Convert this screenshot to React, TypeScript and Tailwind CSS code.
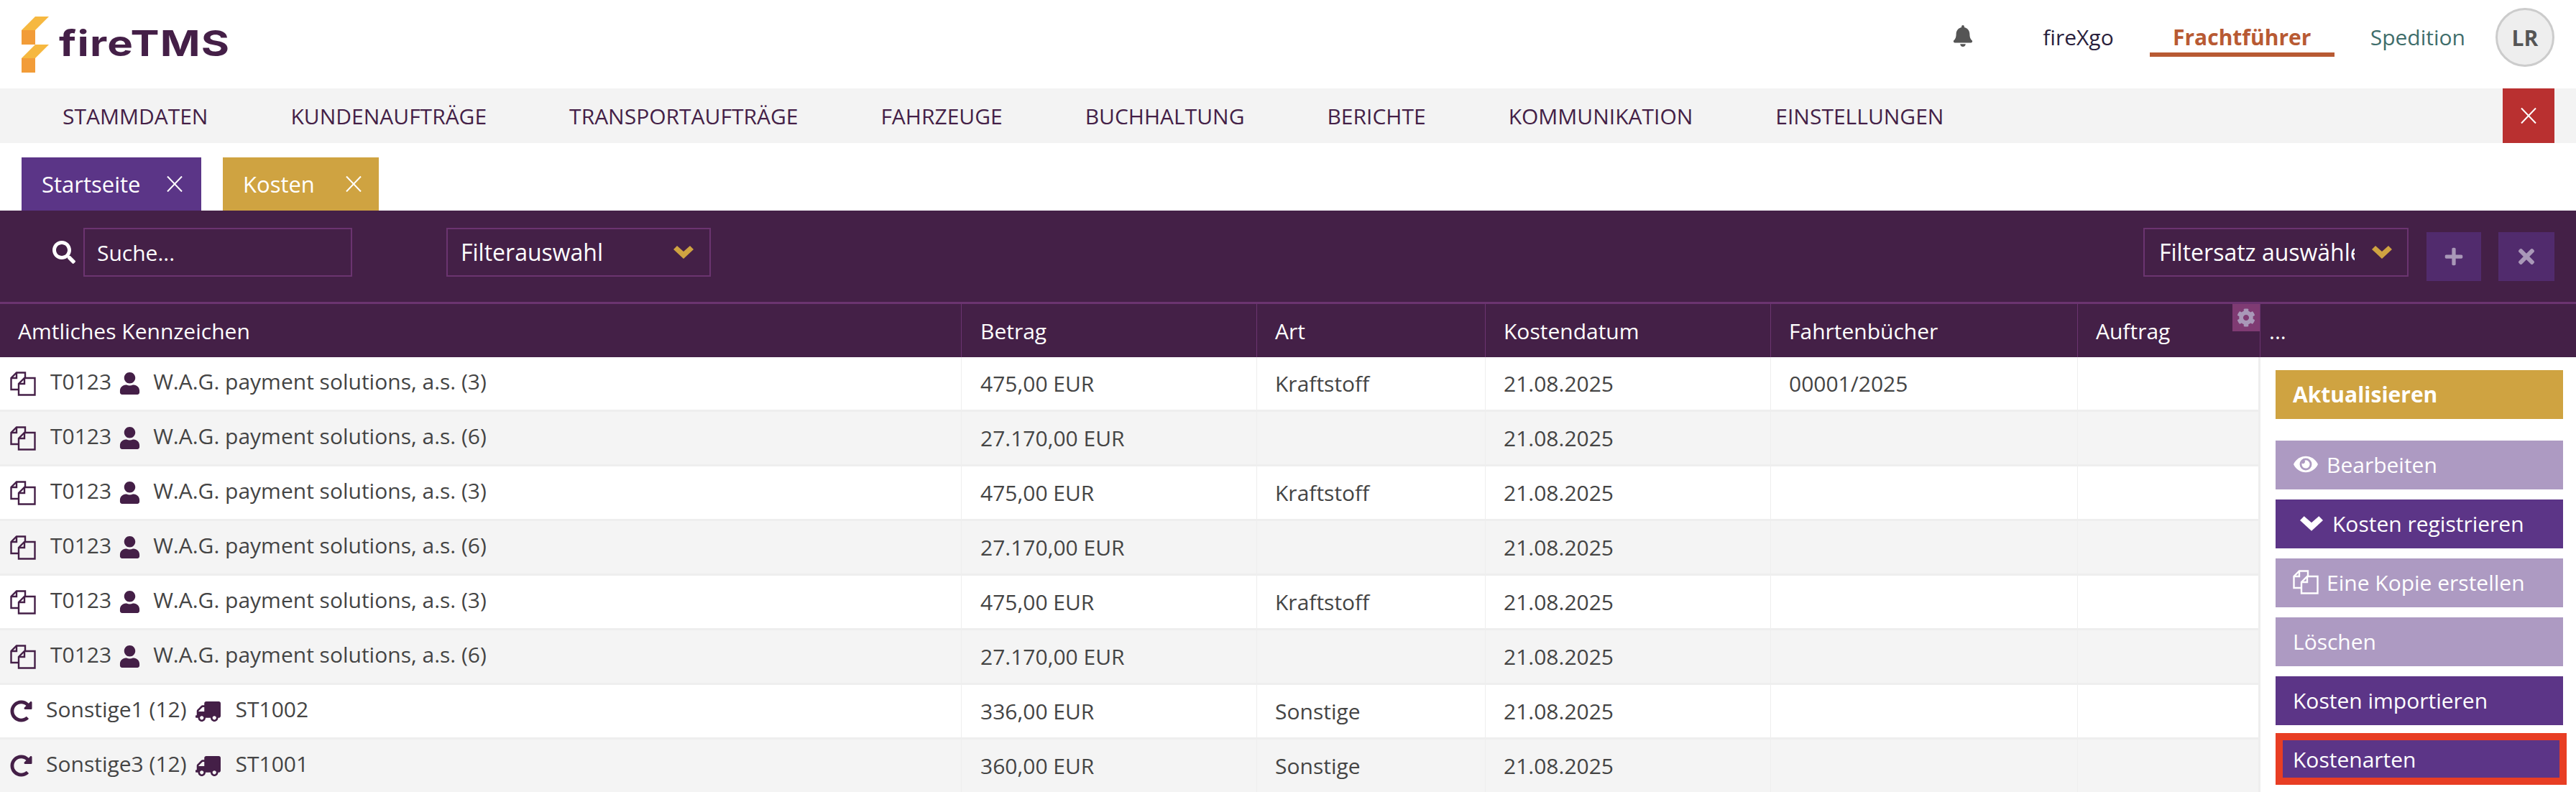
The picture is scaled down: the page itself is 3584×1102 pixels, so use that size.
import { FaBell, FaCog, FaEye, FaPlus, FaRedoAlt, FaSearch, FaTimes, FaTruck, FaUser } from "react-icons/fa";

const menu = ["STAMMDATEN", "KUNDENAUFTRÄGE", "TRANSPORTAUFTRÄGE", "FAHRZEUGE", "BUCHHALTUNG", "BERICHTE", "KOMMUNIKATION", "EINSTELLUNGEN"];

const rows = [
  { kind: "copy", name: "T0123", owner: "W.A.G. payment solutions, a.s. (3)", amount: "475,00 EUR", art: "Kraftstoff", book: "00001/2025" },
  { kind: "copy", name: "T0123", owner: "W.A.G. payment solutions, a.s. (6)", amount: "27.170,00 EUR", art: "", book: "" },
  { kind: "copy", name: "T0123", owner: "W.A.G. payment solutions, a.s. (3)", amount: "475,00 EUR", art: "Kraftstoff", book: "" },
  { kind: "copy", name: "T0123", owner: "W.A.G. payment solutions, a.s. (6)", amount: "27.170,00 EUR", art: "", book: "" },
  { kind: "copy", name: "T0123", owner: "W.A.G. payment solutions, a.s. (3)", amount: "475,00 EUR", art: "Kraftstoff", book: "" },
  { kind: "copy", name: "T0123", owner: "W.A.G. payment solutions, a.s. (6)", amount: "27.170,00 EUR", art: "", book: "" },
  { kind: "repeat", name: "Sonstige1 (12)", owner: "ST1002", amount: "336,00 EUR", art: "Sonstige", book: "" },
  { kind: "repeat", name: "Sonstige3 (12)", owner: "ST1001", amount: "360,00 EUR", art: "Sonstige", book: "" },
];

const ThinX = ({ className }: { className?: string }) => (
  <svg viewBox="0 0 22 22" className={className} fill="none" stroke="currentColor" strokeWidth="2">
    <path d="M1 0.5 L21 21.5 M21 0.5 L1 21.5" />
  </svg>
);

const CopyIcon = ({ className }: { className?: string }) => (
  <svg viewBox="0 0 36 34" className={className} fill="none" stroke="currentColor" strokeWidth="2.4">
    <path d="M11 25 H1.5 V9 L9 1.5 H21 V9" />
    <path d="M9 1.5 V9 H1.5" />
    <path d="M12 32.5 V17 L20 9 H34.5 V32.5 Z" />
    <path d="M20 9 V17 H12" />
  </svg>
);

const Chevron = ({ className }: { className?: string }) => (
  <svg viewBox="0 0 28 18" className={className} fill="currentColor">
    <polygon points="0,5 5,0 14,8 23,0 28,5 14,18" />
  </svg>
);

const Logo = () => (
  <svg viewBox="0 0 38 78" className="w-[38px] h-[78px]">
    <polygon points="19,0 38,0 19,19 0,19" fill="#F6B840" />
    <rect x="0" y="19" width="19" height="20" fill="#F29C38" />
    <polygon points="19,39 38,39 19,58 0,58" fill="#F6B840" />
    <rect x="0" y="58" width="19" height="20" fill="#F29C38" />
  </svg>
);

const btn = "flex items-center h-[68px] w-[400px] pl-6 pb-[2px] text-white text-[30px] shrink-0";

const App = () => {
  return (
    <div className="h-[1102px] w-[3584px] overflow-hidden bg-white text-[30px] text-[#444] font-['Open_Sans',sans-serif]">
      {/* top bar */}
      <header className="h-[123px] flex items-center pl-[30px] pr-[30px]">
        <Logo />
        <span className="ml-[14px] mb-[4px] inline-block origin-left scale-x-[1.2] text-[50px] leading-none font-bold text-[#441F47] font-['Inter',sans-serif] tracking-[1px]">fireTMS</span>
        <div className="ml-auto flex items-center">
          <FaBell className="text-[#555] w-[30px] h-[30px] mb-[23px]" />
          <span className="ml-[96px] mb-[21px] text-[#2a1f3d]">fireXgo</span>
          <span className="relative ml-[50px] w-[257px] mb-[21px] text-center font-bold text-[#B85A33]">
            Frachtführer
            <span className="absolute left-0 right-0 -bottom-[5px] h-[6px] bg-[#B85A33]" />
          </span>
          <span className="ml-[50px] mb-[21px] text-[#3F6E6B]">Spedition</span>
          <span className="ml-[42px] mb-[19px] w-[82px] h-[82px] rounded-full bg-[#EEE] border-[3px] border-[#CCC] flex items-center justify-center font-bold text-[#555]">LR</span>
        </div>
      </header>

      {/* main menu */}
      <nav className="h-[76px] bg-[#F3F3F3] flex items-center pl-[87px] pr-[30px] gap-[115px] text-[#441F47]">
        {menu.map((m) => (
          <span key={m}>{m}</span>
        ))}
        <button className="ml-auto w-[72px] h-full bg-[#B93030] text-white flex items-center justify-center">
          <ThinX className="w-[22px] h-[22px]" />
        </button>
      </nav>

      {/* tabs */}
      <div className="h-[94px] flex items-end pl-[30px] gap-[30px] text-white text-[31px]">
        <div className="h-[74px] w-[250px] bg-[#5B3587] flex items-center justify-between pl-[28px] pr-[26px]">
          <span>Startseite</span>
          <ThinX className="w-[22px] h-[22px]" />
        </div>
        <div className="h-[74px] w-[217px] bg-[#CFA341] flex items-center justify-between pl-[28px] pr-[24px]">
          <span>Kosten</span>
          <ThinX className="w-[22px] h-[22px]" />
        </div>
      </div>

      {/* filters */}
      <div className="h-[127px] bg-[#442047] flex items-start pt-[24px] text-white">
        <FaSearch className="ml-[73px] mt-[18px] w-[32px] h-[32px]" />
        <div className="ml-[11px] w-[374px] h-[68px] border-2 border-[#6B3470] flex items-center pl-[17px]">Suche...</div>
        <div className="ml-[131px] w-[368px] h-[68px] border-2 border-[#6B3470] flex items-center justify-between pl-[18px] pr-[22px] text-[32px]">
          <span>Filterauswahl</span>
          <Chevron className="w-[28px] h-[18px] text-[#CFA341]" />
        </div>
        <div className="ml-auto w-[369px] h-[68px] border-2 border-[#6B3470] flex items-center pl-[20px] text-[32px]">
          <span className="w-[272px] overflow-hidden whitespace-nowrap">Filtersatz auswählen</span>
          <Chevron className="ml-[24px] w-[28px] h-[18px] text-[#CFA341]" />
        </div>
        <button className="ml-[25px] mt-[6px] w-[76px] h-[68px] bg-[#512B6D] flex items-center justify-center text-[#A998B8]">
          <FaPlus className="w-[28px] h-[28px]" />
        </button>
        <button className="ml-[24px] mr-[30px] mt-[6px] w-[78px] h-[68px] bg-[#512B6D] flex items-center justify-center text-[#A998B8]">
          <FaTimes className="w-[28px] h-[32px]" />
        </button>
      </div>

      {/* table */}
      <table className="w-full table-fixed border-separate border-spacing-0">
        <colgroup>
          <col className="w-[1338px]" />
          <col className="w-[411px]" />
          <col className="w-[318px]" />
          <col className="w-[397px]" />
          <col className="w-[427px]" />
          <col className="w-[254px]" />
          <col className="w-[439px]" />
        </colgroup>
        <thead>
          <tr className="bg-[#442047] text-white text-left">
            <th className="h-[77px] font-normal pl-[25px] border-t-[3px] border-r border-[#6B3470]">Amtliches Kennzeichen</th>
            <th className="font-normal pl-[26px] border-t-[3px] border-r border-[#6B3470]">Betrag</th>
            <th className="font-normal pl-[25px] border-t-[3px] border-r border-[#6B3470]">Art</th>
            <th className="font-normal pl-[25px] border-t-[3px] border-r border-[#6B3470]">Kostendatum</th>
            <th className="font-normal pl-[25px] border-t-[3px] border-r border-[#6B3470]">Fahrtenbücher</th>
            <th className="relative font-normal pl-[25px] border-t-[3px] border-r border-[#6B3470]">
              Auftrag
              <span className="absolute top-0 right-0 w-[38px] h-[38px] bg-[#7F3B73] flex items-center justify-center text-[#A998B8]">
                <FaCog className="w-[26px] h-[26px]" />
              </span>
            </th>
            <th className="font-normal pl-[12px] border-t-[3px] border-[#6B3470]">...</th>
          </tr>
        </thead>
        <tbody>
          {rows.map((row, i) => (
            <tr key={i} className={i % 2 ? "bg-[#F4F4F4]" : "bg-white"}>
              <td className="h-[76px] pl-[14px] border-b-[3px] border-r border-[#EEE]">
                <div className="flex items-center whitespace-nowrap text-[#444]">
                  {row.kind === "copy" ? (
                    <>
                      <CopyIcon className="w-[36px] h-[34px] text-[#441F47]" />
                      <span className="ml-[20px] mb-[6px]">{row.name}</span>
                      <FaUser className="ml-[11px] w-[29px] h-[31px] text-[#441F47]" />
                      <span className="ml-[18px] mb-[6px]">{row.owner}</span>
                    </>
                  ) : (
                    <>
                      <FaRedoAlt className="w-[31px] h-[31px] text-[#441F47]" />
                      <span className="ml-[19px] mb-[6px]">{row.name}</span>
                      <FaTruck className="ml-[12px] w-[35px] h-[30px] text-[#441F47] -scale-x-100" />
                      <span className="ml-[21px] mb-[6px]">{row.owner}</span>
                    </>
                  )}
                </div>
              </td>
              <td className="pl-[26px] border-b-[3px] border-r border-[#EEE]">{row.amount}</td>
              <td className="pl-[25px] border-b-[3px] border-r border-[#EEE]">{row.art}</td>
              <td className="pl-[25px] border-b-[3px] border-r border-[#EEE]">21.08.2025</td>
              <td className="pl-[25px] border-b-[3px] border-r border-[#EEE]">{row.book}</td>
              <td className="border-b-[3px] border-r-[3px] border-[#EEE]"></td>
              {i === 0 && (
                <td rowSpan={rows.length} className="align-top bg-white pl-[21px] pt-[18px]">
                  <div className="flex flex-col">
                    <button className={`${btn} bg-[#CFA341] font-bold`}>Aktualisieren</button>
                    <button className={`${btn} mt-[30px] bg-[#AD9AC2]`}>
                      <FaEye className="w-[36px] h-[30px] mr-[11px]" />
                      Bearbeiten
                    </button>
                    <button className={`${btn} mt-[14px] bg-[#5C3587] !pl-[34px]`}>
                      <Chevron className="w-[32px] h-[21px] mr-[13px]" />
                      Kosten registrieren
                    </button>
                    <button className={`${btn} mt-[14px] bg-[#AD9AC2]`}>
                      <CopyIcon className="w-[36px] h-[34px] mr-[11px]" />
                      Eine Kopie erstellen
                    </button>
                    <button className={`${btn} mt-[14px] bg-[#AD9AC2]`}>Löschen</button>
                    <button className={`${btn} mt-[14px] bg-[#5C3587]`}>Kosten importieren</button>
                    <button className="flex items-center h-[72px] w-[405px] mt-[11px] pl-[14px] border-[10px] border-[#E83E24] bg-[#5C3587] text-white text-[30px]">Kostenarten</button>
                  </div>
                </td>
              )}
            </tr>
          ))}
        </tbody>
      </table>
    </div>
  );
};

export default App;
